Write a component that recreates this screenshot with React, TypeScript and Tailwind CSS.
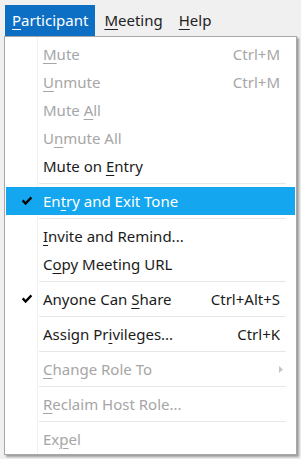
import React from "react";

type Item = {
  label: string;
  key: number; // index of underlined letter
  shortcut?: string;
  disabled?: boolean;
  checked?: boolean;
  active?: boolean;
  submenu?: boolean;
};

const GROUPS: Item[][] = [
  [
    { label: "Mute", key: 0, shortcut: "Ctrl+M", disabled: true },
    { label: "Unmute", key: 0, shortcut: "Ctrl+M", disabled: true },
    { label: "Mute All", key: 5, disabled: true },
    { label: "Unmute All", key: 1, disabled: true },
    { label: "Mute on Entry", key: 8 },
  ],
  [{ label: "Entry and Exit Tone", key: 2, checked: true, active: true }],
  [
    { label: "Invite and Remind...", key: 0 },
    { label: "Copy Meeting URL", key: 1 },
  ],
  [{ label: "Anyone Can Share", key: 11, shortcut: "Ctrl+Alt+S", checked: true }],
  [{ label: "Assign Privileges...", key: 9, shortcut: "Ctrl+K" }],
  [{ label: "Change Role To", key: 0, disabled: true, submenu: true }],
  [{ label: "Reclaim Host Role...", key: 0, disabled: true }],
  [{ label: "Expel", key: 2, disabled: true }],
];

// 밑줄 글자 (mnemonic)
const Mnemonic = ({ text, idx }: { text: string; idx: number }) => (
  <span>
    {text.slice(0, idx)}
    <span className="underline underline-offset-[3px] decoration-1">{text[idx]}</span>
    {text.slice(idx + 1)}
  </span>
);

const Check = () => (
  <svg width="12" height="10" viewBox="0 0 12 10">
    <path d="M0.8 5.2 L2.6 3.6 L4.6 5.8 L9.6 0.6 L11.2 2.2 L4.6 9.2 Z" fill="#000" />
  </svg>
);

const Row = ({ item }: { item: Item }) => {
  const color = item.active
    ? "text-white"
    : item.disabled
    ? "text-[#a6a6a6]"
    : "text-[#1b1b1b]";
  return (
    <div
      className={`h-[28px] flex items-center mx-[1px] ${color} ${
        item.active ? "bg-[#14a6ee]" : ""
      }`}
    >
      <div className="w-[37px] flex justify-center pl-[4px]">
        {item.checked && <Check />}
      </div>
      <div className="flex-1">
        <Mnemonic text={item.label} idx={item.key} />
      </div>
      {item.shortcut && <div className="pr-[15px]">{item.shortcut}</div>}
      {item.submenu && (
        <div className="pr-[12px]">
          <svg width="4" height="7" viewBox="0 0 4 7">
            <path d="M0 0 L4 3.5 L0 7 Z" fill="#c4c4c4" />
          </svg>
        </div>
      )}
    </div>
  );
};

const Separator = () => (
  <div className="h-[7px] flex items-center pl-[34px] pr-[10px]">
    <div className="h-[1px] w-full bg-[#e6e6e6]" />
  </div>
);

export default function App() {
  return (
    <div
      className="w-[301px] h-[459px] bg-[#f0f0f0] relative overflow-hidden text-[15px] leading-none"
      style={{ fontFamily: '"Noto Sans", "Open Sans", sans-serif' }}
    >
      {/* 메뉴바 */}
      <div className="h-[36px] flex items-end pl-[5px] text-[#222]">
        <div className="h-[31px] px-[7px] flex items-center bg-[#0c6fc4] text-white">
          <Mnemonic text="Participant" idx={0} />
        </div>
        <div className="h-[31px] pl-[9px] pr-[8px] flex items-center">
          <Mnemonic text="Meeting" idx={0} />
        </div>
        <div className="h-[31px] pl-[8px] flex items-center">
          <Mnemonic text="Help" idx={0} />
        </div>
      </div>

      {/* 드롭다운 */}
      <div className="absolute left-[4px] top-[36px] w-[293px] h-[419px] bg-white border border-[#a8a8a8] shadow-[2px_2px_2px_rgba(0,0,0,0.35)] pt-[3px]">
        <div className="absolute left-[32px] top-0 bottom-0 w-[1px] bg-[#f2f2f2]" />
        <div className="relative">
          {GROUPS.map((group, gi) => (
            <React.Fragment key={gi}>
              {gi > 0 && <Separator />}
              {group.map((item) => (
                <Row key={item.label} item={item} />
              ))}
            </React.Fragment>
          ))}
        </div>
      </div>
    </div>
  );
}
